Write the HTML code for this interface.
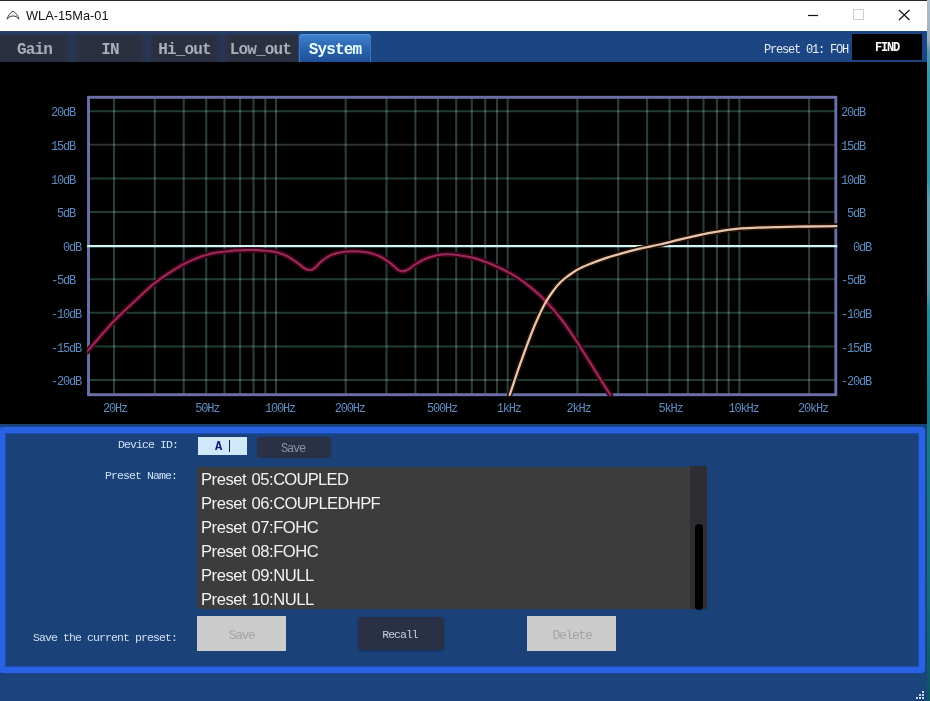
<!DOCTYPE html>
<html><head><meta charset="utf-8"><title>WLA-15Ma-01</title>
<style>
html,body{margin:0;padding:0}
body{width:930px;height:701px;overflow:hidden;position:relative;background:linear-gradient(#aebdc9 0,#9fb0be 40px,#5b93b0 52px,#2f97a8 75px,#2d95a6 180px,#5f9dab 200px,#5a98a6 290px,#1f8c9c 310px,#187b8b 420px,#126a7a 600px,#0b5464 701px);font-family:"Liberation Mono",monospace;}
.win{position:absolute;left:0;top:0;width:927px;height:701px;background:#1b437c;overflow:hidden}
.topline{position:absolute;left:0;top:0;width:927px;height:1px;background:#2a2a2a}
.title{position:absolute;left:0;top:1px;width:927px;height:30px;background:#fff}
.title .txt{position:absolute;left:26px;top:6px;font:12.8px/18px "Liberation Sans",sans-serif;color:#111;white-space:nowrap}
.tabs{position:absolute;left:0;top:31px;width:927px;height:31px;background:#1c4583}
.tabbg{position:absolute;left:0;top:0;width:298px;height:31px;background:linear-gradient(#27426f 0,#253c66 2px,#2b3041 5px)}
.gap{position:absolute;top:3px;height:28px;width:14px;background:linear-gradient(90deg,rgba(36,62,110,0),rgba(36,62,110,.5) 50%,rgba(36,62,110,0))}
.tab{position:absolute;top:3px;height:26px;padding-top:2px;color:#a9aeb9;font:bold 16px/28px "Liberation Mono",monospace;letter-spacing:-0.85px;text-align:center;white-space:nowrap}
.tab.sel{background:linear-gradient(#3f83cf,#2a62ad 55%,#1f4f97);color:#e9ffff;border-radius:4px 4px 0 0;box-shadow:inset 0 1px 0 #5a95d6, inset 1px 0 0 #3d78c0, inset -1px 0 0 #3d78c0}
.p11{font-size:11.5px !important;letter-spacing:-0.9px !important}
.m12{font:12px/14px "Liberation Mono",monospace;letter-spacing:-1.2px;white-space:nowrap;position:absolute}
.black{position:absolute;left:0;top:62px;width:927px;height:362px;background:#000}
.graph{position:absolute;left:0;top:0}
.grid line{stroke:#2c3d37;stroke-width:2.1;mix-blend-mode:screen}
.grid line.h{stroke:#223c32;stroke-width:2}
.grid line.g15{stroke:#2f302f}
.gl{position:absolute;font:12px/14px "Liberation Mono",monospace;letter-spacing:-1.2px;color:#5d8bc0;white-space:nowrap}
.panel{position:absolute;left:-1.5px;top:427.2px;width:914.5px;height:234.3px;border:6px solid #2a62e6;border-radius:4px;background:#1a4279;box-shadow:inset 0 0 2px 1px #1c4fae, 0 0 2px #1c4fae}
.btn{position:absolute;text-align:center}
.list{position:absolute;left:197px;top:467px;width:493px;height:142px;background:#3c3c3c;overflow:hidden}
.list div{height:24px;padding-left:4px;font:16.6px/24px "Liberation Sans",sans-serif;letter-spacing:-0.45px;word-spacing:1px;color:#f2f2f2;white-space:nowrap;position:relative;top:0.6px}
.sb{position:absolute;left:690px;top:466px;width:17px;height:143px;background:#2d2d32}
.thumb{position:absolute;left:695px;top:524px;width:8px;height:86px;background:#000;border-radius:4px}
</style></head><body>
<div class="win">
<div class="topline"></div>
<div class="title">
<svg style="position:absolute;left:0;top:0" width="30" height="30" viewBox="0 1 30 30"><path d="M7 19.2C8.3 15.2 10.4 12.6 13 11.1C15.6 12.6 17.7 15.2 19 19.2C17.2 17 15.2 16 13 16C10.8 16 8.8 17 7 19.2Z" fill="#f0f0f0" stroke="#2a2a2a" stroke-width="0.9" stroke-linejoin="miter"/></svg>
<span class="txt">WLA-15Ma-01</span>
<svg style="position:absolute;left:790px;top:0" width="137" height="30" viewBox="790 1 137 30">
<line x1="808" y1="15.5" x2="818" y2="15.5" stroke="#111" stroke-width="1.2"/>
<rect x="853.5" y="9.5" width="10" height="10" fill="none" stroke="#cfcfcf" stroke-width="1"/>
<path d="M899 10L909.5 20M909.5 10L899 20" stroke="#111" stroke-width="1.2" fill="none"/>
</svg>
</div>
<div class="tabs">
<div class="tabbg"></div><div class="gap" style="left:65px"></div><div class="gap" style="left:140px"></div><div class="gap" style="left:215px"></div>
<div class="tab" style="left:0;width:69px">Gain</div>
<div class="tab" style="left:75px;width:70px">IN</div>
<div class="tab" style="left:149px;width:71px">Hi_out</div>
<div class="tab" style="left:224px;width:73px">Low_out</div>
<div class="tab sel" style="left:299px;width:72px">System</div>
<span class="m12" style="left:764px;top:11.5px;color:#e6eef8">Preset 01: FOH</span>
<div style="position:absolute;left:852px;top:3px;width:70px;height:26px;background:#000"></div>
<span class="m12" style="left:875px;top:10px;color:#fff;font-weight:bold">FIND</span>
</div>
<div class="black">
<div style="position:absolute;left:0;top:-62px;width:930px;height:424px">
<svg class="graph" width="930" height="424" viewBox="0 0 930 424">
<g class="grid"><line x1="114.0" y1="97.3" x2="114.0" y2="394.7"/><line x1="154.8" y1="97.3" x2="154.8" y2="394.7"/><line x1="183.7" y1="97.3" x2="183.7" y2="394.7"/><line x1="206.2" y1="97.3" x2="206.2" y2="394.7"/><line x1="224.5" y1="97.3" x2="224.5" y2="394.7"/><line x1="240.1" y1="97.3" x2="240.1" y2="394.7"/><line x1="253.5" y1="97.3" x2="253.5" y2="394.7"/><line x1="265.3" y1="97.3" x2="265.3" y2="394.7"/><line x1="276.0" y1="97.3" x2="276.0" y2="394.7"/><line x1="345.7" y1="97.3" x2="345.7" y2="394.7"/><line x1="386.5" y1="97.3" x2="386.5" y2="394.7"/><line x1="415.4" y1="97.3" x2="415.4" y2="394.7"/><line x1="437.9" y1="97.3" x2="437.9" y2="394.7"/><line x1="456.2" y1="97.3" x2="456.2" y2="394.7"/><line x1="471.8" y1="97.3" x2="471.8" y2="394.7"/><line x1="485.2" y1="97.3" x2="485.2" y2="394.7"/><line x1="497.0" y1="97.3" x2="497.0" y2="394.7"/><line x1="507.7" y1="97.3" x2="507.7" y2="394.7"/><line x1="577.4" y1="97.3" x2="577.4" y2="394.7"/><line x1="618.2" y1="97.3" x2="618.2" y2="394.7"/><line x1="647.1" y1="97.3" x2="647.1" y2="394.7"/><line x1="669.6" y1="97.3" x2="669.6" y2="394.7"/><line x1="687.9" y1="97.3" x2="687.9" y2="394.7"/><line x1="703.5" y1="97.3" x2="703.5" y2="394.7"/><line x1="716.9" y1="97.3" x2="716.9" y2="394.7"/><line x1="728.7" y1="97.3" x2="728.7" y2="394.7"/><line x1="739.4" y1="97.3" x2="739.4" y2="394.7"/><line x1="809.1" y1="97.3" x2="809.1" y2="394.7"/><line x1="88.5" y1="111.2" x2="835.8" y2="111.2" class="h"/><line x1="88.5" y1="144.8" x2="835.8" y2="144.8" class="h g15"/><line x1="88.5" y1="178.4" x2="835.8" y2="178.4" class="h"/><line x1="88.5" y1="212.0" x2="835.8" y2="212.0" class="h"/><line x1="88.5" y1="279.2" x2="835.8" y2="279.2" class="h"/><line x1="88.5" y1="312.8" x2="835.8" y2="312.8" class="h"/><line x1="88.5" y1="346.4" x2="835.8" y2="346.4" class="h"/><line x1="88.5" y1="380.0" x2="835.8" y2="380.0" class="h"/></g>
<clipPath id="cp"><rect x="87.05" y="95.85" width="750.1999999999999" height="300.29999999999995"/></clipPath>
<rect x="88.5" y="97.3" width="747.3" height="297.4" fill="none" stroke="#6b70a8" stroke-width="2.9"/>
<line x1="87.05" y1="246.1" x2="837.25" y2="246.1" stroke="#cff6f4" stroke-width="2.4"/>
<g clip-path="url(#cp)" fill="none" stroke-linecap="round" stroke-linejoin="round">
<path d="M87.0 351.7C87.2 351.4 86.2 352.7 88.5 350.0C90.8 347.3 96.8 340.3 101.0 335.5C105.2 330.7 110.0 325.2 114.0 321.0C118.0 316.8 121.4 313.8 125.0 310.3C128.6 306.9 132.5 303.4 135.8 300.3C139.1 297.2 141.8 294.4 145.0 291.5C148.2 288.6 151.0 285.9 155.0 282.8C159.0 279.7 164.2 276.1 169.0 273.0C173.8 269.9 179.7 266.3 184.0 264.0C188.3 261.7 191.3 260.5 195.0 259.0C198.7 257.5 202.6 256.0 206.0 255.0C209.4 254.0 212.2 253.4 215.5 252.8C218.8 252.2 222.1 251.9 225.5 251.5C228.9 251.1 232.4 250.7 236.0 250.4C239.6 250.2 243.7 250.1 247.0 250.0C250.3 249.9 252.9 250.0 256.0 250.1C259.1 250.2 262.4 250.5 265.8 250.8C269.2 251.2 273.0 251.3 276.6 252.2C280.2 253.1 283.7 254.3 287.3 256.2C290.9 258.1 295.1 261.3 298.0 263.3C300.9 265.3 302.6 267.2 304.5 268.3C306.4 269.4 307.6 270.0 309.2 270.0C310.8 270.0 312.1 269.8 314.2 268.3C316.3 266.8 319.0 263.3 321.7 261.2C324.4 259.1 327.4 256.8 330.3 255.4C333.2 254.0 336.1 253.2 339.0 252.6C341.9 251.9 343.9 251.7 347.5 251.5C351.1 251.3 356.4 251.2 360.4 251.5C364.3 251.8 367.6 252.2 371.2 253.2C374.8 254.2 378.8 255.8 382.0 257.5C385.2 259.2 387.8 261.2 390.5 263.3C393.2 265.4 396.0 268.5 398.0 269.8C400.0 271.1 400.8 271.3 402.4 271.3C404.0 271.3 405.5 271.0 407.7 269.8C409.9 268.6 412.4 266.2 415.3 264.4C418.2 262.6 422.0 260.4 425.0 259.0C428.0 257.6 431.0 256.9 433.5 256.2C436.0 255.5 437.8 255.1 440.0 254.8C442.2 254.5 443.6 254.2 446.7 254.3C449.8 254.4 454.4 254.6 458.8 255.2C463.2 255.8 468.5 256.6 473.4 257.9C478.2 259.1 483.0 260.8 487.9 262.7C492.8 264.6 497.6 266.9 502.5 269.3C507.4 271.7 512.1 274.2 517.0 277.3C521.9 280.4 526.8 284.2 531.6 288.2C536.5 292.2 541.2 296.4 546.1 301.5C551.0 306.6 555.9 312.2 560.7 318.5C565.6 324.8 570.4 331.8 575.2 339.1C580.1 346.4 585.3 355.1 589.8 362.2C594.2 369.3 598.5 376.1 601.9 381.6C605.3 387.1 609.0 392.8 610.4 395.0" stroke="#3a0016" stroke-width="5.5" style="mix-blend-mode:screen"/>
<path d="M509.7 395.0C510.9 391.3 514.6 380.1 517.0 373.0C519.4 365.9 521.9 359.2 524.3 352.5C526.7 345.8 529.2 339.1 531.6 333.0C534.0 326.9 536.4 321.2 538.8 316.0C541.2 310.8 543.7 305.7 546.1 301.5C548.5 297.3 551.0 293.9 553.4 290.6C555.8 287.4 558.3 284.4 560.7 282.0C563.1 279.6 565.2 278.1 568.0 276.0C570.8 273.9 574.1 271.5 577.7 269.5C581.3 267.5 585.4 265.8 589.8 264.0C594.2 262.2 599.3 260.3 604.3 258.6C609.3 256.9 614.1 255.6 620.0 253.9C625.9 252.2 633.2 250.3 639.8 248.7C646.4 247.1 653.0 246.0 659.6 244.5C666.2 243.0 672.8 241.2 679.4 239.6C686.0 238.0 692.5 236.5 699.1 235.1C705.7 233.7 712.3 232.5 718.9 231.4C725.5 230.3 732.1 229.3 738.7 228.7C745.3 228.1 751.9 228.0 758.5 227.7C765.1 227.4 770.0 227.3 778.3 227.1C786.5 226.9 798.1 226.7 808.0 226.5C817.9 226.3 832.5 226.2 837.4 226.1" stroke="#241000" stroke-width="5.5" style="mix-blend-mode:screen"/>
<path d="M87.0 351.7C87.2 351.4 86.2 352.7 88.5 350.0C90.8 347.3 96.8 340.3 101.0 335.5C105.2 330.7 110.0 325.2 114.0 321.0C118.0 316.8 121.4 313.8 125.0 310.3C128.6 306.9 132.5 303.4 135.8 300.3C139.1 297.2 141.8 294.4 145.0 291.5C148.2 288.6 151.0 285.9 155.0 282.8C159.0 279.7 164.2 276.1 169.0 273.0C173.8 269.9 179.7 266.3 184.0 264.0C188.3 261.7 191.3 260.5 195.0 259.0C198.7 257.5 202.6 256.0 206.0 255.0C209.4 254.0 212.2 253.4 215.5 252.8C218.8 252.2 222.1 251.9 225.5 251.5C228.9 251.1 232.4 250.7 236.0 250.4C239.6 250.2 243.7 250.1 247.0 250.0C250.3 249.9 252.9 250.0 256.0 250.1C259.1 250.2 262.4 250.5 265.8 250.8C269.2 251.2 273.0 251.3 276.6 252.2C280.2 253.1 283.7 254.3 287.3 256.2C290.9 258.1 295.1 261.3 298.0 263.3C300.9 265.3 302.6 267.2 304.5 268.3C306.4 269.4 307.6 270.0 309.2 270.0C310.8 270.0 312.1 269.8 314.2 268.3C316.3 266.8 319.0 263.3 321.7 261.2C324.4 259.1 327.4 256.8 330.3 255.4C333.2 254.0 336.1 253.2 339.0 252.6C341.9 251.9 343.9 251.7 347.5 251.5C351.1 251.3 356.4 251.2 360.4 251.5C364.3 251.8 367.6 252.2 371.2 253.2C374.8 254.2 378.8 255.8 382.0 257.5C385.2 259.2 387.8 261.2 390.5 263.3C393.2 265.4 396.0 268.5 398.0 269.8C400.0 271.1 400.8 271.3 402.4 271.3C404.0 271.3 405.5 271.0 407.7 269.8C409.9 268.6 412.4 266.2 415.3 264.4C418.2 262.6 422.0 260.4 425.0 259.0C428.0 257.6 431.0 256.9 433.5 256.2C436.0 255.5 437.8 255.1 440.0 254.8C442.2 254.5 443.6 254.2 446.7 254.3C449.8 254.4 454.4 254.6 458.8 255.2C463.2 255.8 468.5 256.6 473.4 257.9C478.2 259.1 483.0 260.8 487.9 262.7C492.8 264.6 497.6 266.9 502.5 269.3C507.4 271.7 512.1 274.2 517.0 277.3C521.9 280.4 526.8 284.2 531.6 288.2C536.5 292.2 541.2 296.4 546.1 301.5C551.0 306.6 555.9 312.2 560.7 318.5C565.6 324.8 570.4 331.8 575.2 339.1C580.1 346.4 585.3 355.1 589.8 362.2C594.2 369.3 598.5 376.1 601.9 381.6C605.3 387.1 609.0 392.8 610.4 395.0" stroke="#982a59" stroke-width="2.15"/>
<path d="M509.7 395.0C510.9 391.3 514.6 380.1 517.0 373.0C519.4 365.9 521.9 359.2 524.3 352.5C526.7 345.8 529.2 339.1 531.6 333.0C534.0 326.9 536.4 321.2 538.8 316.0C541.2 310.8 543.7 305.7 546.1 301.5C548.5 297.3 551.0 293.9 553.4 290.6C555.8 287.4 558.3 284.4 560.7 282.0C563.1 279.6 565.2 278.1 568.0 276.0C570.8 273.9 574.1 271.5 577.7 269.5C581.3 267.5 585.4 265.8 589.8 264.0C594.2 262.2 599.3 260.3 604.3 258.6C609.3 256.9 614.1 255.6 620.0 253.9C625.9 252.2 633.2 250.3 639.8 248.7C646.4 247.1 653.0 246.0 659.6 244.5C666.2 243.0 672.8 241.2 679.4 239.6C686.0 238.0 692.5 236.5 699.1 235.1C705.7 233.7 712.3 232.5 718.9 231.4C725.5 230.3 732.1 229.3 738.7 228.7C745.3 228.1 751.9 228.0 758.5 227.7C765.1 227.4 770.0 227.3 778.3 227.1C786.5 226.9 798.1 226.7 808.0 226.5C817.9 226.3 832.5 226.2 837.4 226.1" stroke="#e6c4b2" stroke-width="2.3"/>
</g>
</svg>
<span class="gl" style="left:51px;top:106.3px">20dB</span><span class="gl" style="left:841px;top:106.3px">20dB</span><span class="gl" style="left:51px;top:139.9px">15dB</span><span class="gl" style="left:841px;top:139.9px">15dB</span><span class="gl" style="left:51px;top:173.5px">10dB</span><span class="gl" style="left:841px;top:173.5px">10dB</span><span class="gl" style="left:57px;top:207.1px">5dB</span><span class="gl" style="left:847px;top:207.1px">5dB</span><span class="gl" style="left:63px;top:240.7px">0dB</span><span class="gl" style="left:853px;top:240.7px">0dB</span><span class="gl" style="left:51px;top:274.3px">-5dB</span><span class="gl" style="left:841px;top:274.3px">-5dB</span><span class="gl" style="left:51px;top:307.9px">-10dB</span><span class="gl" style="left:841px;top:307.9px">-10dB</span><span class="gl" style="left:51px;top:341.5px">-15dB</span><span class="gl" style="left:841px;top:341.5px">-15dB</span><span class="gl" style="left:51px;top:375.1px">-20dB</span><span class="gl" style="left:841px;top:375.1px">-20dB</span><span class="gl" style="left:103.0px;top:401.5px">20Hz</span><span class="gl" style="left:195.2px;top:401.5px">50Hz</span><span class="gl" style="left:265.0px;top:401.5px">100Hz</span><span class="gl" style="left:334.7px;top:401.5px">200Hz</span><span class="gl" style="left:426.9px;top:401.5px">500Hz</span><span class="gl" style="left:496.7px;top:401.5px">1kHz</span><span class="gl" style="left:566.4px;top:401.5px">2kHz</span><span class="gl" style="left:658.6px;top:401.5px">5kHz</span><span class="gl" style="left:728.4px;top:401.5px">10kHz</span><span class="gl" style="left:798.1px;top:401.5px">20kHz</span>
</div>
</div>
<div class="panel"></div>
<span class="m12 p11" style="left:118px;top:438px;color:#cfe0f3">Device ID:</span>
<div style="position:absolute;left:198px;top:437px;width:49px;height:18px;background:#cfe9fb"></div>
<span class="m12" style="left:215px;top:440px;color:#15157a;font-weight:bold">A</span>
<div style="position:absolute;left:229px;top:440px;width:1px;height:12px;background:#223"></div>
<div class="btn" style="left:257px;top:437px;width:74px;height:21px;background:#2a3146;border-radius:3px;box-shadow:0 0 1px #243a66"></div>
<span class="m12" style="left:281px;top:442px;color:#8893a6">Save</span>
<span class="m12 p11" style="left:105px;top:469px;color:#cfe0f3">Preset Name:</span>
<div class="list"><div>Preset 05:<span style="letter-spacing:-0.75px">COUPLED</span></div><div>Preset 06:<span style="letter-spacing:-0.65px">COUPLEDHPF</span></div><div>Preset 07:FOHC</div><div>Preset 08:FOHC</div><div>Preset 09:NULL</div><div>Preset 10:NULL</div></div>
<div class="sb"></div><div class="thumb"></div>
<span class="m12 p11" style="left:33px;top:630.5px;color:#cfe0f3">Save the current preset:</span>
<div class="btn" style="left:197px;top:616px;width:89px;height:35px;background:#cccccc"></div>
<span class="m12" style="left:228.5px;top:629px;color:#a3a3a3;font-size:13px;letter-spacing:-1.3px">Save</span>
<div class="btn" style="left:357.5px;top:617px;width:86.5px;height:33px;background:#2a3045;border-radius:4px;box-shadow:0 1px 2px #16305a"></div>
<span class="m12" style="left:382.3px;top:628px;color:#c6cfdf;font-size:11.5px;letter-spacing:-1px">Recall</span>
<div class="btn" style="left:527px;top:616px;width:89px;height:35px;background:#cccccc"></div>
<span class="m12" style="left:552.5px;top:629px;color:#a3a3a3;font-size:13px;letter-spacing:-1.3px">Delete</span>
<svg style="position:absolute;left:914px;top:689px" width="12" height="12" viewBox="0 0 12 12" fill="#c9d3e2"><rect x="8" y="2" width="2" height="2"/><rect x="5" y="5" width="2" height="2"/><rect x="8" y="5" width="2" height="2"/><rect x="2" y="8" width="2" height="2"/><rect x="5" y="8" width="2" height="2"/><rect x="8" y="8" width="2" height="2"/></svg>
</div>
</body></html>
